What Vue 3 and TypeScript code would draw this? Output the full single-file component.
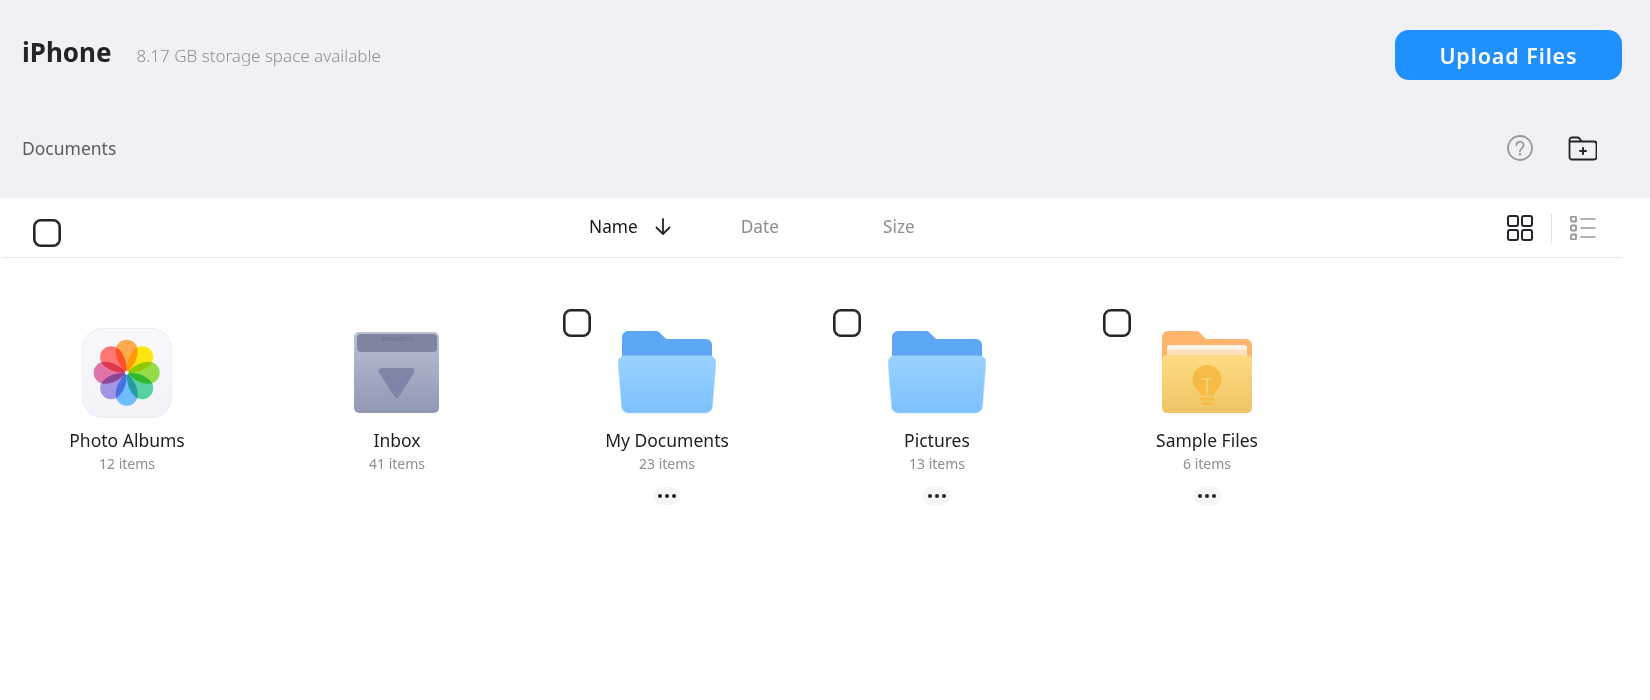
<script setup lang="ts">
interface Item {
  name: string
  count: string
  icon: 'photos' | 'inbox' | 'blue' | 'yellow'
  editable: boolean
}
const items: Item[] = [
  { name: 'Photo Albums', count: '12 items', icon: 'photos', editable: false },
  { name: 'Inbox', count: '41 items', icon: 'inbox', editable: false },
  { name: 'My Documents', count: '23 items', icon: 'blue', editable: true },
  { name: 'Pictures', count: '13 items', icon: 'blue', editable: true },
  { name: 'Sample Files', count: '6 items', icon: 'yellow', editable: true },
]
const petals = [
  { a: 0, c: '#ffa544' },
  { a: 45, c: '#ffe500' },
  { a: 90, c: '#8cdc3c' },
  { a: 135, c: '#4bd09c' },
  { a: 180, c: '#66b9ff' },
  { a: 225, c: '#9a90e2' },
  { a: 270, c: '#e06ba2' },
  { a: 315, c: '#ff6e6e' },
]
</script>

<template>
  <div class="page">
    <header class="head">
      <div class="title-row">
        <div class="title-left">
          <h1 class="device">iPhone</h1>
          <span class="storage">8.17 GB storage space available</span>
        </div>
        <button class="upload">Upload Files</button>
      </div>
      <div class="crumb-row">
        <span class="crumb">Documents</span>
        <div class="crumb-actions">
          <svg class="help" width="28" height="28" viewBox="0 0 28 28" fill="none">
            <circle cx="14" cy="14" r="12" stroke="#98989c" stroke-width="1.800" />
            <path d="M10.4 11.2a3.6 3.6 0 1 1 5.6 3c-1.300.9-2 1.500-2 3" stroke="#98989c" stroke-width="1.800" stroke-linecap="round" />
            <circle cx="14" cy="20.300" r="1.200" fill="#98989c" />
          </svg>
          <svg class="newfolder" width="30" height="26" viewBox="0 0 30 26" fill="none">
            <path d="M2.500 6.500V5a2.500 2.500 0 0 1 2.500-2.500h5.500a2.500 2.500 0 0 1 2.100 1.100l1 1.700a2.500 2.500 0 0 0 2.100 1.200H27a2.500 2.500 0 0 1 2.500 2.500v13a2.500 2.500 0 0 1-2.500 2.500H5a2.500 2.500 0 0 1-2.500-2.500V6.500h12.400" stroke="#232429" stroke-width="1.800" stroke-linejoin="round" />
            <path d="M16 12.300v7.400M12.300 16h7.400" stroke="#232429" stroke-width="2" />
          </svg>
        </div>
      </div>
    </header>

    <div class="toolbar">
      <span class="check"></span>
      <div class="sort">
        <span class="sort-active">Name</span>
        <svg class="arrow" width="18" height="20" viewBox="0 0 18 20" fill="none">
          <path d="M9 2v15M2.500 10.500 9 17l6.500-6.500" stroke="#232429" stroke-width="1.800" stroke-linecap="round" stroke-linejoin="round" />
        </svg>
        <span class="sort-date">Date</span>
        <span class="sort-size">Size</span>
      </div>
      <div class="views">
        <svg width="26" height="26" viewBox="0 0 26 26" fill="none" stroke="#232429" stroke-width="2">
          <rect x="1" y="1" width="10" height="10" rx="2" />
          <rect x="15" y="1" width="10" height="10" rx="2" />
          <rect x="1" y="15" width="10" height="10" rx="2" />
          <rect x="15" y="15" width="10" height="10" rx="2" />
        </svg>
        <span class="divider"></span>
        <svg width="26" height="24" viewBox="0 0 26 24" fill="none" stroke="#98989c" stroke-width="1.800">
          <rect x="1" y="0.500" width="5" height="5" rx="0.800" />
          <rect x="1" y="9.500" width="5" height="5" rx="0.800" />
          <rect x="1" y="18.500" width="5" height="5" rx="0.800" />
          <path d="M10.500 3h15M10.500 12h15M10.500 21h15" stroke-width="1.600" />
        </svg>
      </div>
    </div>

    <main class="grid">
      <article v-for="item in items" :key="item.name" class="item">
        <span v-if="item.editable" class="check item-check"></span>
        <div class="icon">
          <svg v-if="item.icon === 'photos'" width="90" height="90" viewBox="0 0 90 90">
            <defs>
              <linearGradient id="tile" x1="0" y1="0" x2="0" y2="1">
                <stop offset="0" stop-color="#f8f8fc" />
                <stop offset="1" stop-color="#f2f2f9" />
              </linearGradient>
            </defs>
            <rect x="0.500" y="0.500" width="89" height="89" rx="20" fill="url(#tile)" stroke="#ebebf4" />
            <g transform="translate(44.700 44.700)" class="flower">
              <path
                v-for="p in petals"
                :key="p.a"
                class="petal"
                d="M0 0C-5-5-11-12-11-22A11 11 0 0 1 11-22C11-12 5-5 0 0Z"
                :fill="p.c"
                :transform="`rotate(${p.a})`"
              />
              <circle r="2" fill="#fff" />
            </g>
          </svg>

          <svg v-else-if="item.icon === 'inbox'" width="90" height="90" viewBox="0 0 90 90">
            <defs>
              <linearGradient id="tray" x1="0" y1="0" x2="0" y2="1">
                <stop offset="0" stop-color="#b9bfd4" />
                <stop offset="1" stop-color="#9198b4" />
              </linearGradient>
            </defs>
            <rect x="2" y="4" width="85" height="81" rx="5" fill="url(#tray)" />
            <rect x="5" y="6" width="80" height="18" rx="4" fill="#80849e" />
            <text x="45" y="12.500" text-anchor="middle" class="tiny">DOCUMENTS</text>
            <path d="M29.500 43h30L44.700 67Z" fill="#7e85a7" stroke="#7e85a7" stroke-width="6" stroke-linejoin="round" />
          </svg>

          <svg v-else-if="item.icon === 'blue'" width="98" height="90" viewBox="0 0 98 90">
            <defs>
              <linearGradient id="front" x1="0" y1="0" x2="0" y2="1">
                <stop offset="0" stop-color="#9ad2ff" />
                <stop offset="1" stop-color="#7cc0fb" />
              </linearGradient>
            </defs>
            <path d="M4 40V9a6 6 0 0 1 6-6h28c1.500 0 2.800.6 3.800 1.700L47 10c.7.700 1.400 1 2.300 1H88a6 6 0 0 1 6 6V40Z" fill="#5ca8f6" />
            <path d="M0 34a6 6 0 0 1 6-6h86a6 6 0 0 1 6 6l-3.500 44a7 7 0 0 1-7 7H10.500a7 7 0 0 1-7-7Z" fill="url(#front)" stroke="#b0dcff" stroke-width="0.600" />
          </svg>

          <svg v-else width="98" height="90" viewBox="0 0 98 90">
            <defs>
              <linearGradient id="yfront" x1="0" y1="0" x2="0" y2="1">
                <stop offset="0" stop-color="#ffdb84" />
                <stop offset="1" stop-color="#efc466" />
              </linearGradient>
            </defs>
            <path d="M4 40V9a6 6 0 0 1 6-6h28c1.500 0 2.800.6 3.800 1.700L47 10c.7.700 1.400 1 2.300 1H88a6 6 0 0 1 6 6V40Z" fill="#ffb56b" />
            <path d="M9 40V20a3 3 0 0 1 3-3h74a3 3 0 0 1 3 3v20Z" fill="#fff3e8" />
            <path d="M9 22h80v6H9Z" fill="#ffe0bc" />
            <path d="M4 32a5 5 0 0 1 5-5h80a5 5 0 0 1 5 5v48a5 5 0 0 1-5 5H9a5 5 0 0 1-5-5Z" fill="url(#yfront)" />
            <path d="M49 37a14.500 14.500 0 0 0-9.500 25.500c1.800 1.600 2.500 3.300 2.500 5h14c0-1.700.7-3.400 2.500-5A14.500 14.500 0 0 0 49 37Z" fill="#f5bb45" />
            <path d="M44 51h10M49 51v15" stroke="#fbd27e" stroke-width="1.600" fill="none" />
            <rect x="42" y="69.500" width="14" height="3" rx="1.500" fill="#f5bb45" />
            <rect x="43" y="74" width="12" height="3" rx="1.500" fill="#f5bb45" />
          </svg>
        </div>
        <div class="name">{{ item.name }}</div>
        <div class="count">{{ item.count }}</div>
        <div v-if="item.editable" class="more"><i></i><i></i><i></i></div>
      </article>
    </main>
  </div>
</template>

<style>
html, body { margin: 0; background: #fff; }
</style>

<style scoped>
.page {
  width: 1650px;
  height: 700px;
  overflow: hidden;
  font-family: "Noto Sans", "Open Sans", sans-serif;
  color: #232429;
}
.head {
  background: #f0f0f5;
  height: 198px;
  padding: 30px 28px 0 22px;
  box-sizing: border-box;
}
.title-row {
  display: flex;
  justify-content: space-between;
  align-items: center;
  height: 50px;
}
.title-left {
  display: flex;
  align-items: center;
  gap: 25px;
}
.device {
  margin: 0 0 6px;
  font-size: 26px;
  font-weight: 700;
  line-height: 34px;
}
.storage {
  font-size: 17px;
  font-weight: 300;
  color: #8e8e93;
}
.upload {
  width: 227px;
  height: 50px;
  border: 0;
  border-radius: 14px;
  background: #2090ff;
  color: #fff;
  font-family: inherit;
  font-size: 21.500px;
  font-weight: 600;
  letter-spacing: 0.9px;
  padding: 0;
}
.crumb-row {
  display: flex;
  justify-content: space-between;
  align-items: center;
  height: 60px;
  margin-top: 38px;
}
.crumb {
  font-size: 17.500px;
  color: #5b5b60;
}
.crumb-actions {
  display: flex;
  align-items: center;
  gap: 33px;
  padding-right: 25px;
}
.toolbar {
  display: flex;
  align-items: center;
  width: 1620px;
  height: 60px;
  margin-left: 2px;
  border-bottom: 1px solid #e8e8e8;
  box-sizing: border-box;
}
.check {
  display: block;
  width: 28px;
  height: 28px;
  box-sizing: border-box;
  border: 2px solid #232429;
  box-shadow: inset 0 0 0 0.600px #232429;
  border-radius: 8px;
}
.toolbar > .check {
  margin-left: 31px;
  margin-top: 10px;
}
.sort {
  display: flex;
  align-items: center;
  margin-left: 528px;
  font-size: 17.300px;
  color: #8e8e93;
  margin-top: -2px;
}
.sort-active { color: #17181c; }
.arrow { margin-left: 16px; }
.sort-date { margin-left: 69px; }
.sort-size { margin-left: 104px; }
.views {
  display: flex;
  align-items: center;
  margin-left: auto;
  padding-right: 26px;
  margin-top: 1px;
}
.divider {
  width: 1px;
  height: 29px;
  background: #e3e3e3;
  margin: 0 18px;
}
.grid {
  display: flex;
  gap: 30px;
  padding: 51px 0 0 7px;
}
.item {
  width: 240px;
  position: relative;
  display: flex;
  flex-direction: column;
  align-items: center;
}
.item-check {
  position: absolute;
  left: 16px;
  top: 0;
}
.icon {
  height: 90px;
  margin-top: 19px;
  display: flex;
  justify-content: center;
}
.icon svg { display: block; }
.flower { isolation: isolate; }
.petal { mix-blend-mode: multiply; opacity: 0.94; }
.tiny {
  font-size: 5px;
  fill: #70748e;
  font-weight: 700;
  font-family: "Liberation Sans", sans-serif;
}
.name {
  font-size: 17.500px;
  line-height: 24px;
  margin-top: 10px;
  color: #1d1e22;
  white-space: nowrap;
}
.count {
  font-size: 14px;
  line-height: 20px;
  margin-top: 2px;
  color: #8e8e93;
}
.more {
  width: 28px;
  height: 18px;
  margin-top: 13px;
  border-radius: 9px;
  background: #f6f6f6;
  display: flex;
  align-items: center;
  justify-content: center;
  gap: 3px;
}
.more i {
  width: 4px;
  height: 4px;
  border-radius: 50%;
  background: #232429;
}
</style>
